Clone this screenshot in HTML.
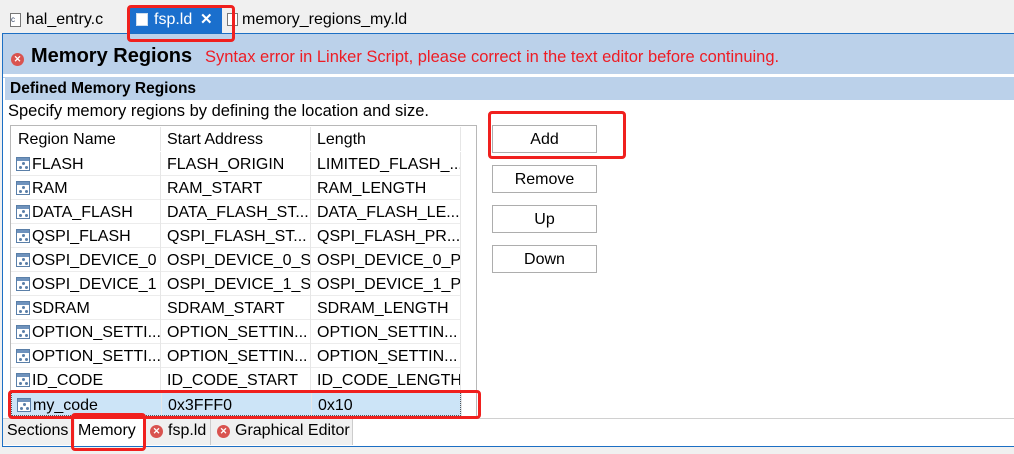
<!DOCTYPE html>
<html><head><meta charset="utf-8"><style>
*{margin:0;padding:0;box-sizing:border-box}
body{width:1014px;height:454px;background:#f0f0f0;font-family:"Liberation Sans","Noto Sans CJK SC",sans-serif;font-size:16px;color:#000;position:relative;overflow:hidden}
.abs{position:absolute}
.ico{position:absolute;width:14px;height:14px;border:1px solid #5a7fa8;background:#fff}
.ico:before{content:"";position:absolute;left:0;top:0;right:0;height:3px;background:#6f93bd}
.ico i{position:absolute;width:3px;height:3px;border-radius:50%;background:#5a7fa8}
.row{position:absolute;left:11px;width:450px;height:24px;border-bottom:1px solid #ececec}
.cell{position:absolute;top:0;height:24px;line-height:26px;border-right:1px solid #e6e6e6;white-space:nowrap;overflow:hidden}
.btn{position:absolute;left:492px;width:105px;height:28px;border:1px solid #adadad;background:#fff;text-align:center;line-height:28px}
.red{position:absolute;border:3px solid #f0201e;border-radius:4px}
.err{position:absolute;width:13px;height:13px;border-radius:50%;background:#d9534f;color:#fff;font-size:9px;font-weight:bold;text-align:center;line-height:13px}
</style></head><body>
<div class="abs" style="left:10px;top:13px;width:11px;height:14px;border:1px solid #777;background:#fff;font-size:8px;line-height:12px;color:#346">c</div>
<div class="abs" style="left:26px;top:11px;font-size:16px">hal_entry.c</div>
<div class="abs" style="left:130px;top:7px;width:92px;height:27px;background:#1a6fcd"></div>
<div class="abs" style="left:136px;top:13px;width:12px;height:13px;border:1px solid #cde;background:#fff"></div>
<div class="abs" style="left:154px;top:11px;font-size:16px;color:#fff">fsp.ld</div>
<div class="abs" style="left:200px;top:10px;font-size:15px;color:#fff;font-weight:bold">✕</div>
<div class="abs" style="left:227px;top:13px;width:11px;height:13px;border:1px solid #777;background:#fff"></div>
<div class="abs" style="left:242px;top:11px;font-size:16px">memory_regions_my.ld</div>
<div class="abs" style="left:2px;top:33px;width:1012px;height:414px;border:1px solid #1c6fc4;border-right:none;background:#fff"></div>
<div class="abs" style="left:3px;top:34px;width:1011px;height:40px;background:#bbd1ea"></div>
<div class="err" style="left:11px;top:53px">✕</div>
<div class="abs" style="left:31px;top:45px;font-size:20px;font-weight:bold">Memory Regions</div>
<div class="abs" style="left:205px;top:48px;font-size:16.5px;color:#ee1c24">Syntax error in Linker Script, please correct in the text editor before continuing.</div>
<div class="abs" style="left:3px;top:77px;width:1011px;height:1px;background:#bbd1ea"></div>
<div class="abs" style="left:5px;top:78px;width:1009px;height:22px;background:#bbd1ea"></div>
<div class="abs" style="left:10px;top:80px;font-size:15.5px;font-weight:bold">Defined Memory Regions</div>
<div class="abs" style="left:8px;top:102px;font-size:16.5px">Specify memory regions by defining the location and size.</div>
<div class="abs" style="left:10px;top:125px;width:467px;height:293px;border:1px solid #b8b8b8;background:#fff"></div>
<div class="row" style="top:127px;height:25px;border-bottom:none">
<div class="cell" style="left:0;width:150px;padding-left:7px">Region Name</div>
<div class="cell" style="left:150px;width:150px;padding-left:6px">Start Address</div>
<div class="cell" style="left:300px;width:150px;padding-left:6px">Length</div>
</div>
<div id="rows"></div>
<div class="btn" style="top:125px">Add</div>
<div class="btn" style="top:165px">Remove</div>
<div class="btn" style="top:205px">Up</div>
<div class="btn" style="top:245px">Down</div>
<div class="abs" style="left:3px;top:418px;width:1011px;height:1px;background:#d0d0d0"></div>
<div class="abs" style="left:3px;top:419px;width:350px;height:26px;background:#f0f0f0;border-right:1px solid #ccc"></div>
<div class="abs" style="left:7px;top:422px">Sections</div>
<div class="abs" style="left:75px;top:419px;width:69px;height:26px;background:#fff"></div>
<div class="abs" style="left:78px;top:422px">Memory</div>
<div class="abs" style="left:145px;top:419px;width:1px;height:26px;background:#ccc"></div>
<div class="err" style="left:150px;top:425px">✕</div>
<div class="abs" style="left:168px;top:422px">fsp.ld</div>
<div class="abs" style="left:210px;top:419px;width:1px;height:26px;background:#ccc"></div>
<div class="err" style="left:217px;top:425px">✕</div>
<div class="abs" style="left:235px;top:422px">Graphical Editor</div>
<div class="abs" style="left:0;top:447px;width:1014px;height:7px;background:#f0f0f0"></div>
<div class="red" style="left:127px;top:5px;width:108px;height:37px"></div>
<div class="red" style="left:488px;top:111px;width:138px;height:48px"></div>
<div class="red" style="left:8px;top:390px;width:473px;height:29px"></div>
<div class="red" style="left:71px;top:413px;width:75px;height:38px"></div>
<script>
var d=[["FLASH","FLASH_ORIGIN","LIMITED_FLASH_..."],["RAM","RAM_START","RAM_LENGTH"],["DATA_FLASH","DATA_FLASH_ST...","DATA_FLASH_LE..."],["QSPI_FLASH","QSPI_FLASH_ST...","QSPI_FLASH_PR..."],["OSPI_DEVICE_0","OSPI_DEVICE_0_S...","OSPI_DEVICE_0_P..."],["OSPI_DEVICE_1","OSPI_DEVICE_1_S...","OSPI_DEVICE_1_P..."],["SDRAM","SDRAM_START","SDRAM_LENGTH"],["OPTION_SETTI...","OPTION_SETTIN...","OPTION_SETTIN..."],["OPTION_SETTI...","OPTION_SETTIN...","OPTION_SETTIN..."],["ID_CODE","ID_CODE_START","ID_CODE_LENGTH"],["my_code","0x3FFF0","0x10"]];
var h="";d.forEach(function(r,i){var t=152+i*24;var sel=i==10;
h+='<div class="row" style="top:'+t+'px;'+(sel?'background:#cce4f7;border:1px dotted #555;':'')+'">'+
'<div class="ico" style="left:5px;top:5px"><i style="left:5px;top:4px"></i><i style="left:2px;top:8px"></i><i style="left:8px;top:8px"></i></div>'+
'<div class="cell" style="left:0;width:150px;padding-left:21px">'+r[0]+'</div>'+
'<div class="cell" style="left:150px;width:150px;padding-left:6px">'+r[1]+'</div>'+
'<div class="cell" style="left:300px;width:150px;padding-left:6px">'+r[2]+'</div></div>';});
document.getElementById("rows").innerHTML=h;
</script>
</body></html>
